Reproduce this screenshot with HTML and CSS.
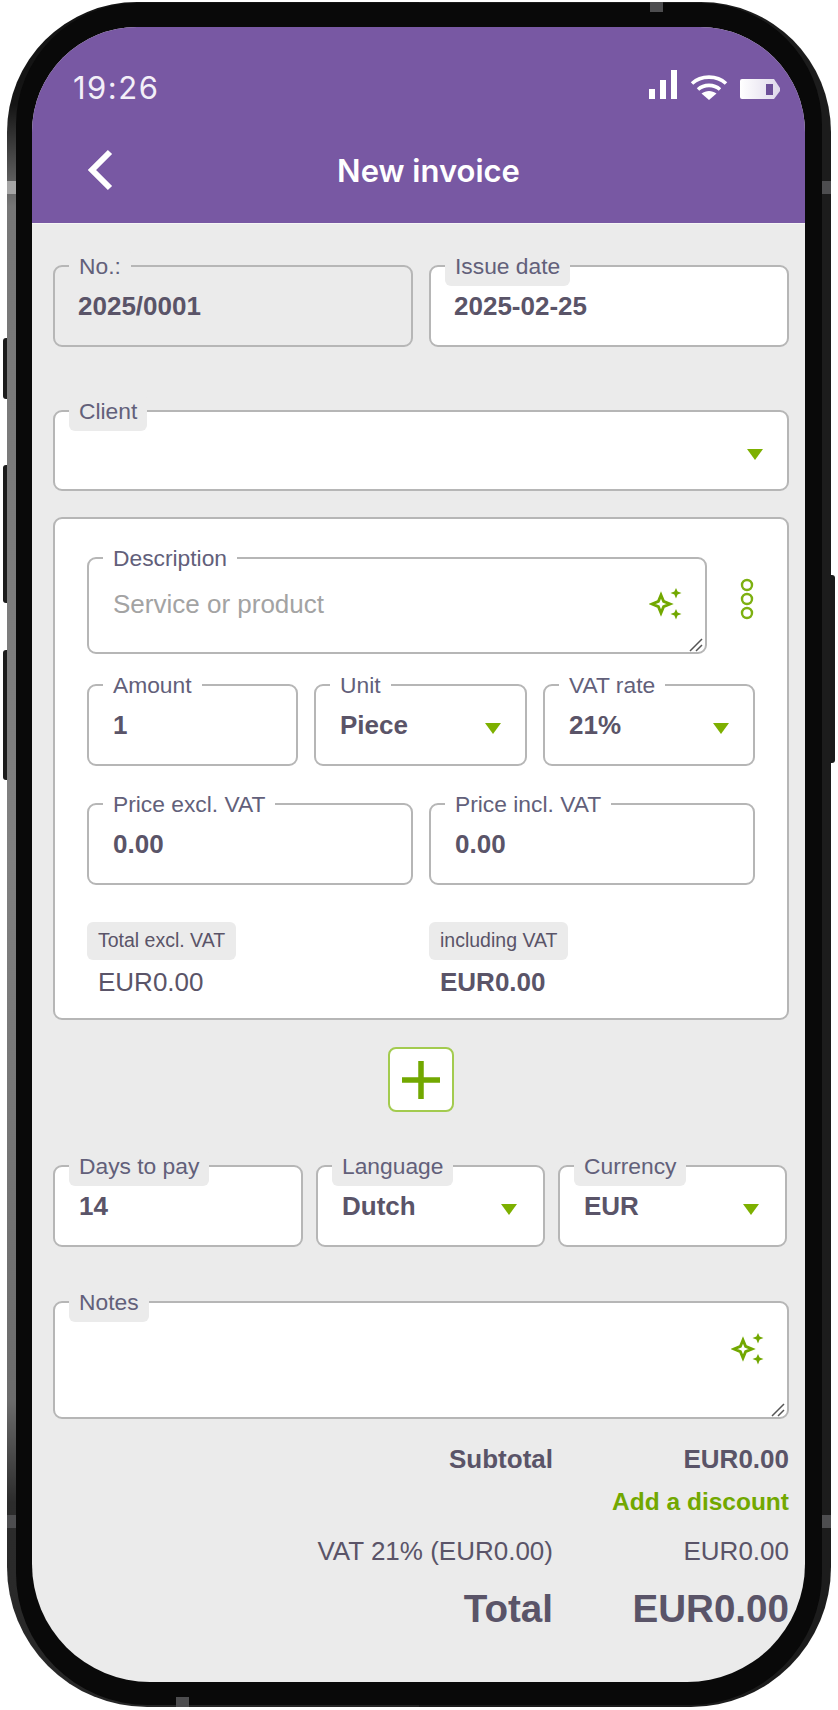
FILE: index.html
```html
<!DOCTYPE html>
<html lang="en">
<head>
    <meta charset="UTF-8">
    <meta name="viewport" content="width=device-width, initial-scale=1.0">
    <title>New invoice</title>
    <link rel="stylesheet" href="styles.css">
</head>
<body>
    <div class="phone">
        <!-- side buttons and antenna bands -->
        <span class="side-btn btn-mute"></span>
        <span class="side-btn btn-up"></span>
        <span class="side-btn btn-down"></span>
        <span class="side-btn btn-power"></span>
        <span class="band band-left-top"></span>
        <span class="band band-left-bottom"></span>
        <span class="band band-right-top"></span>
        <span class="band band-right-bottom"></span>
        <span class="band band-top"></span>
        <span class="band band-bottom"></span>

        <div class="bezel">
            <div class="screen">
                <header class="app-header">
                    <div class="status-bar">
                        <span class="clock">19:26</span>
                        <div class="status-icons">
                            <svg width="29" height="30" viewBox="0 0 29 30">
                                <rect x="0" y="19" width="6" height="10" fill="#fff"/>
                                <rect x="11" y="10" width="6" height="19" fill="#fff"/>
                                <rect x="22" y="0" width="6" height="29" fill="#fff"/>
                            </svg>
                            <svg width="38" height="26" viewBox="0 0 38 26">
                                <path d="M2 9.5C11 1 27 1 36 9.5" fill="none" stroke="#fff" stroke-width="3.6"/>
                                <path d="M8 15.5C14 10 24 10 30 15.5" fill="none" stroke="#fff" stroke-width="3.6"/>
                                <path d="M19 26L11.5 19.5C16 16 22 16 26.5 19.5Z" fill="#fff"/>
                            </svg>
                            <svg width="41" height="22" viewBox="0 0 41 22">
                                <defs>
                                    <linearGradient id="batt" x1="0" x2="1" y1="0" y2="0">
                                        <stop offset="0" stop-color="#fff"/>
                                        <stop offset="1" stop-color="#ded8ea"/>
                                    </linearGradient>
                                </defs>
                                <path d="M2 1H34L40 10V13L34 21H2Q0 21 0 19V3Q0 1 2 1Z" fill="url(#batt)"/>
                                <rect x="26" y="6" width="7" height="11" fill="#6c4f98"/>
                            </svg>
                        </div>
                    </div>
                    <div class="title-bar">
                        <svg class="back-icon" width="26" height="42" viewBox="0 0 26 42">
                            <path d="M23 3L5 21L23 39" fill="none" stroke="#fff" stroke-width="6"/>
                        </svg>
                        <h1>New invoice</h1>
                    </div>
                </header>

                <main class="form">
                    <div class="row cols-2 head-row">
                        <div class="field is-disabled">
                            <span class="lbl">No.:</span>
                            <span class="val">2025/0001</span>
                        </div>
                        <div class="field">
                            <span class="lbl">Issue date</span>
                            <span class="val">2025-02-25</span>
                        </div>
                    </div>

                    <div class="row client-row">
                        <div class="field">
                            <span class="lbl">Client</span>
                            <span class="caret"></span>
                        </div>
                    </div>

                    <section class="card">
                        <div class="desc-row">
                            <div class="field field-desc on-card">
                                <span class="lbl">Description</span>
                                <span class="placeholder">Service or product</span>
                                <svg class="sparkle" width="34" height="34" viewBox="0 0 34 34">
                                    <path d="M12 7L14.6 13.4L21 16L14.6 18.6L12 25L9.4 18.6L3 16L9.4 13.4Z" fill="none" stroke="#72a800" stroke-width="2.8"/>
                                    <path d="M27 0L28.6 3.4L32.5 5L28.6 6.6L27 10.5L25.4 6.6L21.5 5L25.4 3.4Z" fill="#72a800"/>
                                    <path d="M27 21L28.6 24.4L32.5 26L28.6 27.6L27 31.5L25.4 27.6L21.5 26L25.4 24.4Z" fill="#72a800"/>
                                </svg>
                                <svg class="grip" width="14" height="14" viewBox="0 0 14 14">
                                    <path d="M1 13L13 1M7 13L13 7" stroke="#555" stroke-width="1.5"/>
                                </svg>
                            </div>
                            <svg class="more-icon" width="14" height="42" viewBox="0 0 14 42">
                                <circle cx="7" cy="7" r="5" fill="none" stroke="#7db010" stroke-width="2.4"/>
                                <circle cx="7" cy="21" r="5" fill="none" stroke="#7db010" stroke-width="2.4"/>
                                <circle cx="7" cy="35" r="5" fill="none" stroke="#7db010" stroke-width="2.4"/>
                            </svg>
                        </div>

                        <div class="row line-row">
                            <div class="field on-card">
                                <span class="lbl">Amount</span>
                                <span class="val">1</span>
                            </div>
                            <div class="field on-card">
                                <span class="lbl">Unit</span>
                                <span class="val">Piece</span>
                                <span class="caret"></span>
                            </div>
                            <div class="field on-card">
                                <span class="lbl">VAT rate</span>
                                <span class="val">21%</span>
                                <span class="caret"></span>
                            </div>
                        </div>

                        <div class="row cols-2 price-row">
                            <div class="field on-card">
                                <span class="lbl">Price excl. VAT</span>
                                <span class="val">0.00</span>
                            </div>
                            <div class="field on-card">
                                <span class="lbl">Price incl. VAT</span>
                                <span class="val">0.00</span>
                            </div>
                        </div>

                        <div class="row cols-2 line-totals">
                            <div class="line-total">
                                <span class="pill">Total excl. VAT</span>
                                <span class="line-amount">EUR0.00</span>
                            </div>
                            <div class="line-total">
                                <span class="pill">including VAT</span>
                                <span class="line-amount is-bold">EUR0.00</span>
                            </div>
                        </div>
                    </section>

                    <div class="add-wrap">
                        <div class="add-btn">
                            <svg width="38" height="38" viewBox="0 0 38 38">
                                <path d="M0 19H38M19 0V38" stroke="#72a800" stroke-width="5.5"/>
                            </svg>
                        </div>
                    </div>

                    <div class="row options-row">
                        <div class="field">
                            <span class="lbl">Days to pay</span>
                            <span class="val">14</span>
                        </div>
                        <div class="field">
                            <span class="lbl">Language</span>
                            <span class="val">Dutch</span>
                            <span class="caret"></span>
                        </div>
                        <div class="field">
                            <span class="lbl">Currency</span>
                            <span class="val">EUR</span>
                            <span class="caret"></span>
                        </div>
                    </div>

                    <div class="row notes-row">
                        <div class="field field-notes">
                            <span class="lbl">Notes</span>
                            <svg class="sparkle" width="34" height="34" viewBox="0 0 34 34">
                                <path d="M12 7L14.6 13.4L21 16L14.6 18.6L12 25L9.4 18.6L3 16L9.4 13.4Z" fill="none" stroke="#72a800" stroke-width="2.8"/>
                                <path d="M27 0L28.6 3.4L32.5 5L28.6 6.6L27 10.5L25.4 6.6L21.5 5L25.4 3.4Z" fill="#72a800"/>
                                <path d="M27 21L28.6 24.4L32.5 26L28.6 27.6L27 31.5L25.4 27.6L21.5 26L25.4 24.4Z" fill="#72a800"/>
                            </svg>
                            <svg class="grip" width="14" height="14" viewBox="0 0 14 14">
                                <path d="M1 13L13 1M7 13L13 7" stroke="#555" stroke-width="1.5"/>
                            </svg>
                        </div>
                    </div>

                    <div class="summary">
                        <span class="sum-label is-bold">Subtotal</span>
                        <span class="sum-value is-bold">EUR0.00</span>
                        <span></span>
                        <span class="sum-value discount">Add a discount</span>
                        <span class="sum-label vat-line">VAT 21% (EUR0.00)</span>
                        <span class="sum-value vat-line">EUR0.00</span>
                        <span class="sum-label grand">Total</span>
                        <span class="sum-value grand">EUR0.00</span>
                    </div>
                </main>
            </div>
        </div>
    </div>
</body>
</html>
```

FILE: styles.css
```css
* {
    box-sizing: border-box;
}
body {
    margin: 0;
    background: #fff;
    font-family: "Liberation Sans", Arial, sans-serif;
    color: #5a5468;
}

/* phone frame: only the left edge has the grey metal strip */
.phone {
    position: relative;
    width: 824px;
    height: 1705px;
    margin: 2px 0 0 7px;
    padding: 1px 9px 2px 9px;
    border-radius: 130px 130px 140px 140px;
    background-color: #1c1c1c;
    background-image: linear-gradient(180deg, #141414 0, #141414 6%, #777 12%, #808080 50%, #6c6c6c 82%, #2c2c2c 88%, #262626 100%);
    background-size: 50% 100%;
    background-repeat: no-repeat;
}
.bezel {
    height: 100%;
    padding: 24px 17px 23px 16px;
    border-radius: 122px 122px 132px 132px;
    background: #090909;
}
.screen {
    display: flex;
    flex-direction: column;
    height: 100%;
    border-radius: 105px 105px 118px 118px;
    overflow: hidden;
    background: #ebebeb;
}
.side-btn {
    position: absolute;
    width: 4px;
    background: #1b1b1b;
}
.btn-mute { left: -4px; top: 336px; height: 61px; border-radius: 3px 0 0 3px; }
.btn-up { left: -4px; top: 463px; height: 138px; border-radius: 3px 0 0 3px; }
.btn-down { left: -4px; top: 648px; height: 130px; border-radius: 3px 0 0 3px; }
.btn-power { right: -4px; top: 573px; height: 188px; border-radius: 0 3px 3px 0; }
.band {
    position: absolute;
    background: #4d4d4f;
}
.band-left-top { left: 0; top: 179px; width: 9px; height: 13px; background: #a5a5a5; }
.band-left-bottom { left: 0; top: 1513px; width: 9px; height: 13px; }
.band-right-top { right: 0; top: 179px; width: 9px; height: 13px; }
.band-right-bottom { right: 0; top: 1513px; width: 9px; height: 13px; }
.band-top { left: 643px; top: 0; width: 13px; height: 10px; }
.band-bottom { left: 169px; bottom: 0; width: 13px; height: 10px; }

/* purple header */
.app-header {
    height: 197px;
    flex-shrink: 0;
    border-bottom: 1px solid #f5f5f5;
    background: #7858a3;
    color: #fff;
}
.status-bar {
    display: flex;
    justify-content: space-between;
    align-items: flex-end;
    height: 73px;
    padding: 0 24px 0 41px;
}
.clock {
    margin-bottom: -6px;
    font-family: Inter, sans-serif;
    font-size: 31px;
    letter-spacing: 1.5px;
    line-height: 36px;
    color: #f3eff8;
}
.status-icons {
    display: flex;
    align-items: flex-end;
    gap: 12px;
}
.title-bar {
    position: relative;
    display: flex;
    justify-content: center;
    align-items: center;
    height: 96px;
    margin-top: 22px;
    padding-left: 20px;
}
.title-bar h1 {
    margin: 0;
    font-family: Inter, sans-serif;
    font-size: 31px;
    font-weight: 600;
}
.back-icon {
    position: absolute;
    left: 55px;
    top: 27px;
}

/* form */
.form {
    padding: 41px 16px 0 21px;
}
.row {
    display: grid;
    gap: 16px;
}
.cols-2 {
    grid-template-columns: 1fr 1fr;
}
.client-row {
    margin-top: 63px;
}
.client-row .field {
    height: 81px;
}
.field {
    position: relative;
    height: 82px;
    padding: 24px 23px 0 24px;
    border: 2px solid #b6b6b6;
    border-radius: 9px;
    background: #fff;
}
.head-row .field {
    padding-left: 23px;
}
.field.is-disabled {
    background: #ebebeb;
}
.lbl {
    position: absolute;
    left: 14px;
    top: -18px;
    height: 37px;
    padding: 0 10px;
    border-radius: 6px;
    background: #ebebeb;
    font-size: 22.8px;
    line-height: 34px;
    white-space: nowrap;
    color: #62607a;
}
.on-card .lbl {
    background: #fff;
}
.val {
    display: block;
    font-size: 26px;
    font-weight: bold;
    line-height: 30px;
}
.placeholder {
    display: block;
    margin-top: 6px;
    font-size: 26px;
    line-height: 30px;
    color: #a3a3a3;
}
.caret {
    position: absolute;
    right: 24px;
    top: 37px;
    width: 0;
    height: 0;
    border-left: 8px solid transparent;
    border-right: 8px solid transparent;
    border-top: 11px solid #7db000;
}
.sparkle {
    position: absolute;
    right: 22px;
    top: 29px;
}
.grip {
    position: absolute;
    right: 2px;
    bottom: 0;
}

/* item card */
.card {
    height: 503px;
    margin-top: 26px;
    padding: 38px 32px 0;
    border: 2px solid #b6b6b6;
    border-radius: 9px;
    background: #fff;
}
.desc-row {
    display: flex;
    justify-content: space-between;
    align-items: flex-start;
}
.field-desc {
    width: 620px;
    height: 97px;
}
.more-icon {
    margin: 21px 1px 0 0;
}
.line-row {
    grid-template-columns: 211px 213px 212px;
    margin-top: 30px;
}
.price-row {
    margin-top: 37px;
}
.line-totals {
    margin-top: 37px;
}
.line-total {
    display: flex;
    flex-direction: column;
    align-items: flex-start;
}
.pill {
    height: 38px;
    padding: 0 11px;
    border-radius: 6px;
    background: #ebebeb;
    font-size: 19.5px;
    line-height: 36px;
}
.line-amount {
    margin: 4px 0 0 11px;
    font-size: 26px;
    line-height: 36px;
}
.is-bold {
    font-weight: bold;
}

.add-wrap {
    display: flex;
    justify-content: center;
    margin-top: 27px;
}
.add-btn {
    display: flex;
    justify-content: center;
    align-items: center;
    width: 66px;
    height: 65px;
    border: 2px solid #a3cb4f;
    border-radius: 8px;
    background: #fff;
}

.options-row {
    grid-template-columns: 250px 229px 229px;
    gap: 13px;
    margin-top: 53px;
}
.options-row .field:nth-child(2) .caret {
    right: 26px;
}
.options-row .field:nth-child(3) .caret {
    right: 26px;
}
.notes-row {
    margin-top: 54px;
}
.field-notes {
    height: 118px;
}
.field-notes .sparkle {
    top: 30px;
}

/* totals at the bottom */
.summary {
    display: grid;
    grid-template-columns: 500px 236px;
    margin-top: 20px;
    text-align: right;
    font-size: 26px;
    line-height: 40px;
}
.discount {
    font-size: 24.5px;
    font-weight: bold;
    color: #72a800;
    line-height: 46px;
}
.vat-line {
    line-height: 52px;
}
.grand {
    font-size: 38.6px;
    font-weight: bold;
    line-height: 64px;
}
```
